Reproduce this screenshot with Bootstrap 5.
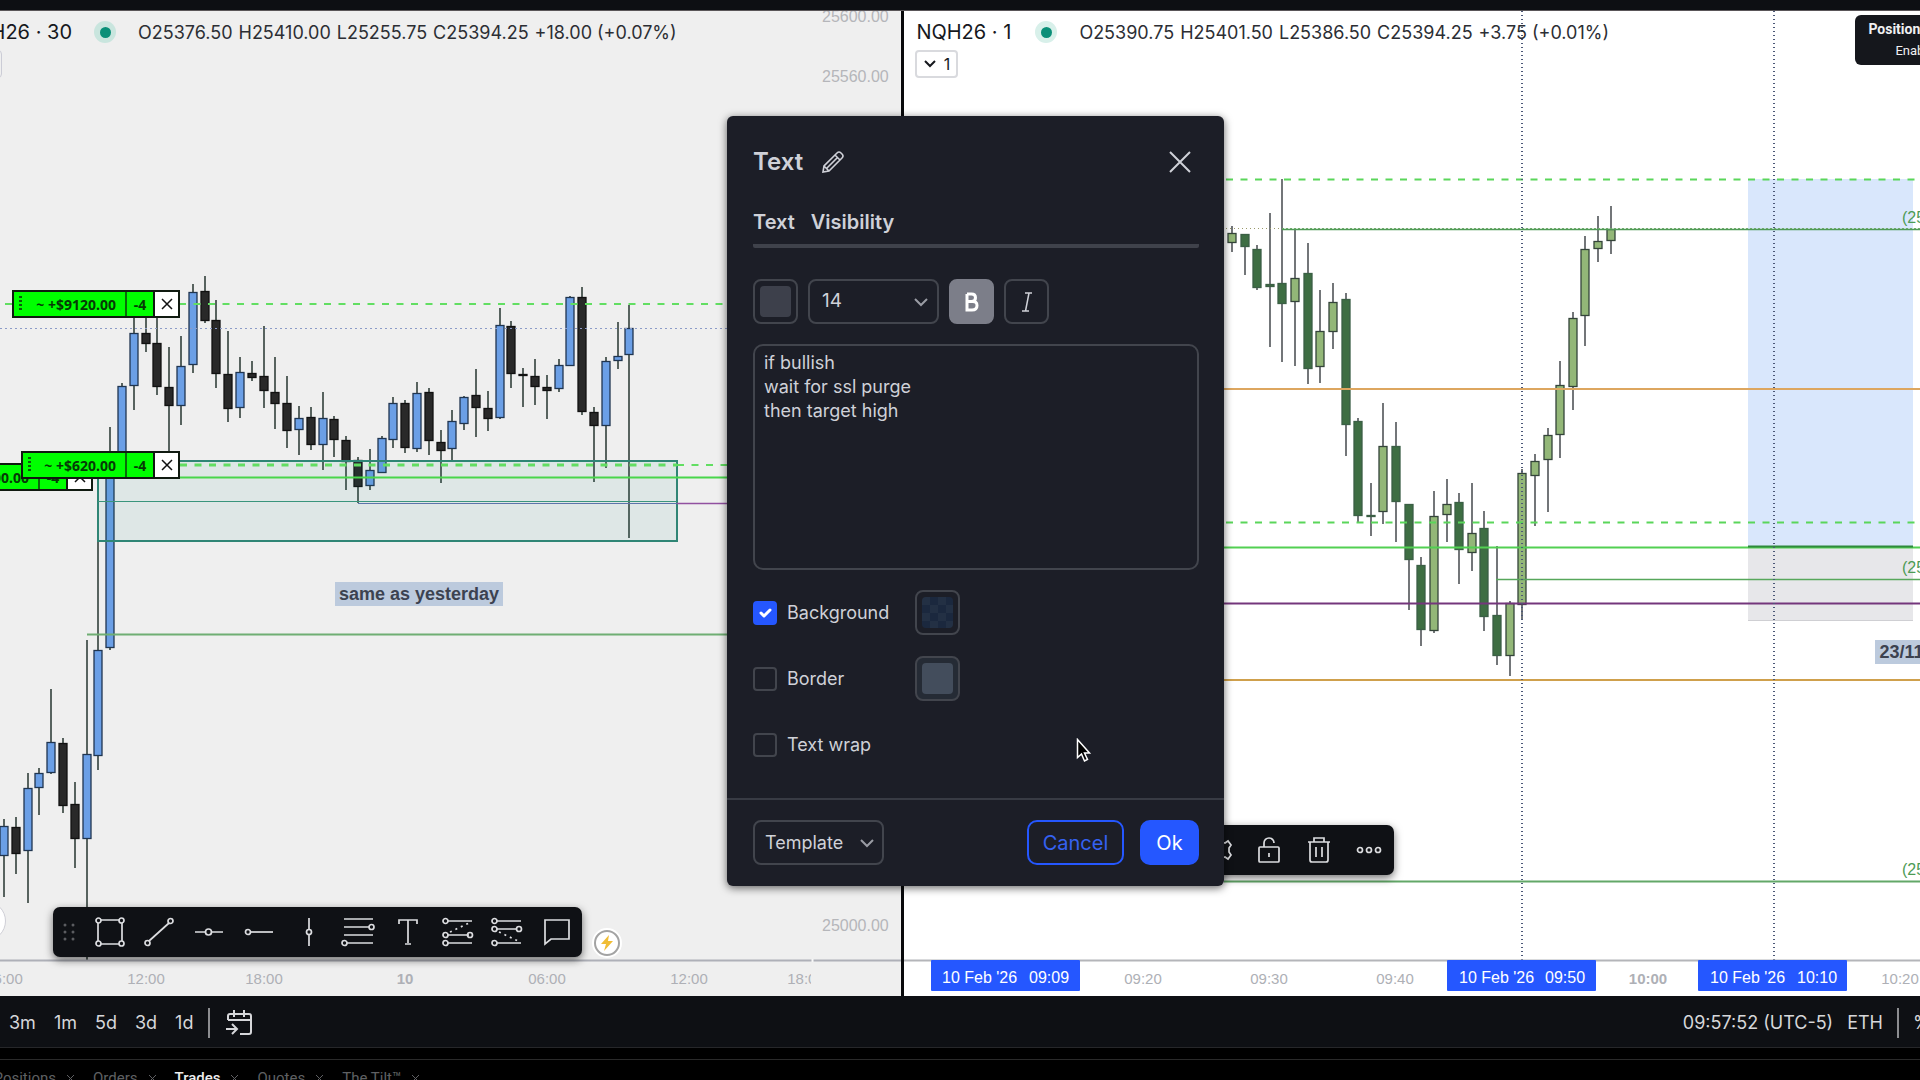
<!DOCTYPE html>
<html lang="en">
<head>
<meta charset="utf-8">
<meta name="viewport" content="width=device-width, initial-scale=1">
<title>NQH26 charts</title>
<link href="https://cdn.jsdelivr.net/npm/bootstrap@5.3.0/dist/css/bootstrap.min.css" rel="stylesheet">
<style>
  :root { --ink: #0f1115; --panel: #1c1e27; --line: #42454d; --soft: #cfd1d8; --blue: #2557ff; }
  body { font-family: Inter, "Open Sans", sans-serif; background: #000; color: var(--soft); }
  svg { display: block; }
  .icon { fill: none; stroke: currentColor; stroke-width: 2; }
  .topstrip { height: 11px; background: #0d0f13; border-bottom: 1px solid #5a5659; }
  .pane-left { flex: 0 0 calc(47% + 2px); background: #efefef; border-right: 3px solid #08090b; }
  .pane-right { background: #fff; }
  .plot { position: absolute; inset: 0; width: 100%; height: 100%; }
  .legend { position: absolute; top: 7px; left: 0; height: 28px; color: #16181d; font-size: 20px; white-space: nowrap; }
  .pane-right .legend { left: 12px; }
  .symbol-clip { width: 72px; overflow: hidden; justify-content: flex-end; }
  .status-dot { width: 22px; height: 22px; margin: 0 22px; border-radius: 50%; background: #c9e5de; display: grid; place-items: center; }
  .pane-right .status-dot { background: #d8f0ea; margin: 0 22px 0 24px; }
  .status-dot::after { content: ""; width: 11px; height: 11px; border-radius: 50%; background: #0b8f78; }
  .ohlc { font-size: 18px; gap: 6px; padding-top: 1px; color: #2c2e34; }
  .count-btn { position: absolute; left: 11px; top: 39px; width: 43px; height: 28px; border: 2px solid #d9dade; border-radius: 4px; background: #fff; color: #16181d; font-size: 16px; }
  .edge-btn { position: absolute; left: -8px; top: 39px; width: 10px; height: 28px; border: 1px solid #cbccd6; border-radius: 4px; }
  .order-tag { position: absolute; height: 28px; border: 2px solid #101a10; background: #0f0; color: #063b06; font: bold 14px "Noto Sans", sans-serif; }
  .order-tag .money { justify-content: flex-end; overflow: hidden; white-space: nowrap; padding-right: 9px; }
  .order-tag .qty { width: 28px; border-left: 2px solid #0a6b0a; }
  .order-tag button { width: 25px; background: #fff; border: 0; border-left: 2px solid #101a10; color: #111; }
  .order-tag .icon { stroke-width: 1.5; }
  .grip { width: 3px; height: 16px; margin-left: 5px; background: repeating-linear-gradient(#0a5c0a 0 2px, transparent 2px 4px); }
  .note { position: absolute; font: bold 18px "Liberation Sans", sans-serif; color: #3c4250; background: #bccadd; line-height: 24px; padding: 0 4px; white-space: nowrap; }
  .toolbox { position: absolute; height: 50px; border-radius: 7px; background: var(--ink); color: #dcdde0; box-shadow: 0 3px 8px rgba(0,0,0,.55); }
  .toolbox button { width: 50px; padding: 0; border: 0; background: none; color: inherit; display: grid; place-items: center; }
  .toolbox .icon { stroke-width: 1.7; }
  .bolt { position: absolute; left: 594px; top: 919px; width: 26px; height: 26px; border: 2px solid #a3a3a3; border-radius: 50%; background: #fff; box-shadow: 0 0 0 2px #fff; display: grid; place-items: center; padding: 0; }
  .round-edge { position: absolute; left: -34px; top: 890px; width: 40px; height: 40px; border-radius: 50%; background: #fff; border: 1px solid #cfcfd6; }
  .position-card { position: absolute; left: 951px; top: 4px; width: 140px; height: 50px; border-radius: 6px; background: #15171c; color: #f0f0f2; font: 14px/21px Roboto, sans-serif; padding: 4px 13px; }
  .position-card div + div { padding-left: 27px; font-size: 13px; }
  .dialog { position: absolute; z-index: 5; left: 727px; top: 116px; width: 497px; background: var(--panel); border-radius: 6px; box-shadow: 0 2px 8px rgba(0,0,0,.6); }
  .dialog-main { padding: 26px 25px 31px 26px; }
  .dialog h1 { font-size: 24px; line-height: 40px; font-weight: 600; }
  .dialog .plain { border: 0; background: none; color: inherit; padding: 0; }
  .dialog .rename { margin-left: 18px; }
  .tabs { margin-top: 28px; border-bottom: 4px solid #3f424b; gap: 16px; height: 38px; border-radius: 2px; }
  .tabs a { font-size: 20px; line-height: 24px; font-weight: 600; color: var(--soft); text-decoration: none; }
  .tools { margin-top: 31px; gap: 10px; }
  .box { height: 45px; border: 2px solid var(--line); border-radius: 8px; background: transparent; color: var(--soft); }
  .square { width: 45px; padding: 5px; }
  .square i { display: block; width: 100%; height: 100%; border-radius: 4px; background: #3d404b; }
  .square .slate { background: #434d5c; }
  .square .checks { background: repeating-conic-gradient(#1b283e 0 25%, #233044 0 50%) 0 0 / 16px 16px; }
  .size-box { width: 131px; font-size: 19px; padding: 0 12px; appearance: none; background: url("data:image/svg+xml,%3Csvg xmlns='http://www.w3.org/2000/svg' width='14' height='10'%3E%3Cpath d='M1 2l6 6 6-6' fill='none' stroke='%239a9ca4' stroke-width='2'/%3E%3C/svg%3E") no-repeat right 9px center; }
  .box.on { background: #7c7e89; border-color: #7c7e89; color: #fff; }
  .message { width: 100%; height: 226px; margin-top: 20px; padding: 5px 9px; border: 2px solid var(--line); border-radius: 10px; background: transparent; color: var(--soft); font-size: 18px; line-height: 24px; resize: none; display: block; }
  .options { margin-top: 20px; gap: 21px; }
  .options > div { height: 45px; }
  .options label { font-size: 18px; width: 128px; margin-left: 10px; }
  .options .form-check-input { width: 24px; height: 24px; margin: 0; border: 2px solid var(--line); border-radius: 4px; background-color: transparent; }
  .options .form-check-input:checked { background-color: var(--blue); border-color: var(--blue); }
  .dialog-foot { border-top: 2px solid #383b44; padding: 20px 25px 21px 26px; }
  .template { width: 131px; font-size: 18px; padding: 0 8px 0 10px; }
  .template .icon { color: #9a9ca4; }
  .cancel { width: 97px; font-size: 20px; border-color: var(--blue); color: #3562f2; border-radius: 10px; }
  .okay { width: 59px; font-size: 20px; border-color: var(--blue); background: var(--blue); color: #fff; border-radius: 10px; padding: 0; }
  .rangebar { height: 52px; padding-top: 2px; background: #0e1014; border-bottom: 1px solid #26272a; color: #d6d7da; font-size: 18px; }
  .rangebar a { color: inherit; text-decoration: none; }
  .rangebar .ranges { padding-left: 9px; gap: 18px; }
  .divide { width: 2px; height: 30px; background: #8c8d90; }
  .ranges .divide { margin: 0 -3px; }
  .rangebar .clock { gap: 14px; white-space: nowrap; }
  .clip-end { width: 7px; overflow: hidden; }
  .dock { margin-top: 11px; height: 21px; border-top: 1px solid #2a2a2a; padding-top: 7px; font-size: 15px; line-height: 22px; gap: 18px; overflow: hidden; color: #5f6063; font-family: Roboto, sans-serif; white-space: nowrap; }
  .dock a { color: inherit; text-decoration: none; }
  .dock a.current { color: #eee; font-weight: 500; }
  .dock .first { width: 56px; display: flex; justify-content: flex-end; overflow: hidden; }
  .dock > div { display: flex; gap: 10px; align-items: center; height: 22px; }
  .pointer { position: absolute; z-index: 6; left: 1076px; top: 738px; }
  .axis { font: 15px "Liberation Sans", sans-serif; fill: #aeb0b6; text-anchor: middle; }
  .price { font: 16px "Liberation Sans", sans-serif; fill: #b5b6ba; }
  .stamp { font: 16px "Liberation Sans", sans-serif; fill: #fff; }
  .level { font: 16px "Liberation Sans", sans-serif; fill: #4d9b55; }
</style>
</head>
<body>
<div class="vh-100 d-flex flex-column overflow-hidden position-relative">
  <div class="topstrip flex-shrink-0"></div>

  <main class="d-flex flex-grow-1 overflow-hidden">
    <section class="pane-left position-relative overflow-hidden">
      <svg class="plot" role="img" aria-label="30 minute chart">
        <g transform="translate(0,-11)">
          <g id="leftCandles"></g>
          <rect x="98" y="461" width="579" height="80" fill="#14917b" fill-opacity=".08" stroke="#2f8575" stroke-width="2"/>
          <path d="M98 501.500H677" stroke="#3a957c"/>
          <path d="M0 328.500H760" stroke="#8c9bc8" stroke-dasharray="2 3"/>
          <path d="M5 304H760" stroke="#62de62" stroke-width="2" stroke-dasharray="7 7.500"/>
          <path d="M180 465H677" stroke="#62de62" stroke-width="3" stroke-dasharray="7 7.500"/>
          <path d="M677 465H760" stroke="#62de62" stroke-width="2" stroke-dasharray="7 7.500"/>
          <path d="M98 477.500H760" stroke="#48d64b" stroke-width="2"/>
          <path d="M358 503.500H677" stroke="#5c74ab"/>
          <path d="M677 503.500H760" stroke="#9150a0" stroke-width="1.500"/>
          <path d="M87 634.500H760" stroke="#6fae73" stroke-width="2"/>
          <path d="M0 960.500H901" stroke="#aeb0b8" stroke-width="2"/>
          <path d="M812.500 959V962" stroke="#f7f7f7" stroke-width="2"/>
          <g class="axis">
            <text x="4" y="984">06:00</text><text x="146" y="984">12:00</text><text x="264" y="984">18:00</text>
            <text x="405" y="984" font-weight="bold">10</text><text x="547" y="984">06:00</text><text x="689" y="984">12:00</text>
          </g>
          <clipPath id="axisEnd"><rect x="780" y="962" width="31" height="32"/></clipPath>
          <g class="axis" clip-path="url(#axisEnd)"><text x="806" y="984">18:00</text></g>
          <g class="price"><text x="822" y="22">25600.00</text><text x="822" y="82">25560.00</text><text x="822" y="931">25000.00</text></g>
        </g>
      </svg>

      <div class="legend d-flex align-items-center">
        <div class="symbol-clip d-flex"><span>NQH26 · 30</span></div>
        <span class="status-dot"></span>
        <div class="ohlc d-flex"><span>O25376.50</span><span>H25410.00</span><span>L25255.75</span><span>C25394.25</span><span>+18.00 (+0.07%)</span></div>
      </div>
      <div class="edge-btn"></div>

      <div class="order-tag d-flex align-items-stretch" style="left:-60px;top:452px;width:153px">
        <span class="money flex-grow-1 d-flex align-items-center">+$1000.00</span>
        <span class="qty d-flex align-items-center justify-content-center">-4</span>
        <button class="d-grid p-0" style="place-items:center" aria-label="Cancel order"><svg class="icon" width="12" height="12"><path d="M1 1l10 10M11 1L1 11"/></svg></button>
      </div>
      <div class="order-tag d-flex align-items-stretch" style="left:12px;top:279px;width:168px">
        <span class="grip align-self-center"></span>
        <span class="money flex-grow-1 d-flex align-items-center">~ +$9120.00</span>
        <span class="qty d-flex align-items-center justify-content-center">-4</span>
        <button class="d-grid p-0" style="place-items:center" aria-label="Cancel order"><svg class="icon" width="12" height="12"><path d="M1 1l10 10M11 1L1 11"/></svg></button>
      </div>
      <div class="order-tag d-flex align-items-stretch" style="left:21px;top:440px;width:159px">
        <span class="grip align-self-center"></span>
        <span class="money flex-grow-1 d-flex align-items-center">~ +$620.00</span>
        <span class="qty d-flex align-items-center justify-content-center">-4</span>
        <button class="d-grid p-0" style="place-items:center" aria-label="Cancel order"><svg class="icon" width="12" height="12"><path d="M1 1l10 10M11 1L1 11"/></svg></button>
      </div>

      <div class="note" style="left:335px;top:571px">same as yesterday</div>
      <div class="round-edge"></div>

      <div class="toolbox d-flex" style="left:53px;top:896px;width:529px">
        <svg width="32" height="50" fill="#5b5c60"><circle cx="12" cy="18" r="1.500"/><circle cx="20" cy="18" r="1.500"/><circle cx="12" cy="25" r="1.500"/><circle cx="20" cy="25" r="1.500"/><circle cx="12" cy="32" r="1.500"/><circle cx="20" cy="32" r="1.500"/></svg>
        <button aria-label="Rectangle"><svg class="icon" width="30" height="30"><path d="M6 3H24M6 27H24M3 6V24M27 6V24"/><circle cx="3.500" cy="3.500" r="2.500"/><circle cx="26.500" cy="3.500" r="2.500"/><circle cx="3.500" cy="26.500" r="2.500"/><circle cx="26.500" cy="26.500" r="2.500"/></svg></button>
        <button aria-label="Trend line"><svg class="icon" width="30" height="30"><path d="M5 24L25 6"/><circle cx="3.500" cy="26" r="2.500"/><circle cx="26.500" cy="4" r="2.500"/></svg></button>
        <button aria-label="Horizontal line"><svg class="icon" width="30" height="30"><path d="M1 15H11M18 15H29"/><circle cx="14.500" cy="15" r="3"/></svg></button>
        <button aria-label="Horizontal ray"><svg class="icon" width="30" height="30"><path d="M7 15H29"/><circle cx="4" cy="15" r="2.500"/></svg></button>
        <button aria-label="Vertical line"><svg class="icon" width="30" height="30"><path d="M15 1V12M15 18V29"/><circle cx="15" cy="15" r="2.500"/></svg></button>
        <button aria-label="Fib retracement"><svg class="icon" width="34" height="30"><path d="M3 2H32M3 10H28M3 18H32M6 26H32"/><circle cx="30.500" cy="10" r="2.500"/><circle cx="3.500" cy="26" r="2.500"/></svg></button>
        <button aria-label="Text"><svg class="icon" width="30" height="30"><path d="M6 7V3H24V7M15 3V26M12 27H18"/></svg></button>
        <button aria-label="Long position"><svg class="icon" width="32" height="30"><path d="M6 4H30M6 18H27M6 26H30"/><path d="M8 15L27 6" stroke-dasharray="2 4"/><circle cx="3.500" cy="4" r="2.500"/><circle cx="3.500" cy="18" r="2.500"/><circle cx="28" cy="18" r="2.500"/><circle cx="3.500" cy="26" r="2.500"/></svg></button>
        <button aria-label="Short position"><svg class="icon" width="32" height="30"><path d="M6 4H30M6 12H26M6 26H30"/><path d="M8 15L27 24" stroke-dasharray="2 4"/><circle cx="3.500" cy="4" r="2.500"/><circle cx="3.500" cy="12" r="2.500"/><circle cx="28" cy="12" r="2.500"/><circle cx="3.500" cy="26" r="2.500"/></svg></button>
        <button aria-label="Comment"><svg class="icon" width="30" height="30"><path d="M3 3H27V22H9L3 27Z"/></svg></button>
      </div>
      <button class="bolt" aria-label="Events"><svg width="14" height="16"><path d="M9 0L1 9H6L4 16L13 6H8Z" fill="#f0bd35"/></svg></button>
    </section>

    <section class="pane-right position-relative flex-grow-1 overflow-hidden">
      <svg class="plot" role="img" aria-label="1 minute chart">
        <g transform="translate(-904,-11)">
          <path d="M1748 179H1913V547H1748Z" fill="#d9e7fc"/>
          <path d="M1748 547H1913V621H1748Z" fill="#e7e7ea"/>
          <path d="M1748 620.500H1913" stroke="#cfcfd3"/>
          <g id="rightCandles"></g>
          <path d="M1226 179.500H1920" stroke="#5ad65a" stroke-width="2" stroke-dasharray="7 7.500"/>
          <path d="M1226 228.500H1282" stroke="#9a9a6a" stroke-dasharray="1 3"/>
          <path d="M1282 228.500H1920" stroke="#79b070" stroke-dasharray="2 2"/>
          <path d="M1282 229.500H1920" stroke="#4f9a57" stroke-width="1.500"/>
          <path d="M1224 389H1920" stroke="#dda65f" stroke-width="2"/>
          <path d="M1226 522.500H1920" stroke="#5ad65a" stroke-width="2" stroke-dasharray="7 7.500"/>
          <path d="M1224 547.500H1920" stroke="#52d052" stroke-width="2"/>
          <path d="M1748 546.500H1913" stroke="#2e8a3c" stroke-width="2"/>
          <path d="M1496 579.500H1920" stroke="#57a75b" stroke-width="1.500"/>
          <path d="M1224 603.500H1920" stroke="#74367c" stroke-width="2"/>
          <path d="M1224 680H1920" stroke="#cfa04c" stroke-width="2"/>
          <path d="M1224 881.500H1920" stroke="#63a868" stroke-width="2"/>
          <path d="M1522 11V960M1774 11V960" stroke="#4c5878" stroke-width="2" stroke-dasharray="1 3"/>
          <path d="M903 960.500H1920" stroke="#b4b5b9" stroke-width="2"/>
          <g fill="#2557ff"><rect x="931" y="960" width="149" height="31" rx="1"/><rect x="1447" y="960" width="149" height="31" rx="1"/><rect x="1698" y="960" width="149" height="31" rx="1"/></g>
          <g class="stamp">
            <text x="942" y="983">10 Feb '26</text><text x="1029" y="983">09:09</text>
            <text x="1459" y="983">10 Feb '26</text><text x="1545" y="983">09:50</text>
            <text x="1710" y="983">10 Feb '26</text><text x="1797" y="983">10:10</text>
          </g>
          <g class="axis"><text x="1143" y="984">09:20</text><text x="1269" y="984">09:30</text><text x="1395" y="984">09:40</text><text x="1648" y="984" font-weight="bold">10:00</text><text x="1900" y="984">10:20</text></g>
          <g class="level"><text x="1902" y="223">(25394.25)</text><text x="1902" y="573">(25</text><text x="1902" y="875">(25</text></g>
        </g>
      </svg>
      <div class="legend d-flex align-items-center">
        <span>NQH26 · 1</span>
        <span class="status-dot"></span>
        <div class="ohlc d-flex"><span>O25390.75</span><span>H25401.50</span><span>L25386.50</span><span>C25394.25</span><span>+3.75 (+0.01%)</span></div>
      </div>
      <button class="count-btn d-flex align-items-center justify-content-center gap-2 p-0"><svg class="icon" width="12" height="8"><path d="M1 1l5 5 5-5"/></svg>1</button>
      <div class="position-card text-nowrap"><div class="fw-bold">Position size</div><div>Enabled</div></div>
      <div class="note" style="left:971px;top:629px">23/11</div>

      <div class="toolbox d-flex" style="left:290px;top:814px;width:200px">
        <button aria-label="Settings"><svg class="icon" width="28" height="28"><path d="M12 2h4l1 4 3 1 3-2 3 4-2 3v4l2 3-3 4-3-2-3 1-1 4h-4"/><circle cx="14" cy="14" r="4"/></svg></button>
        <button aria-label="Unlock"><svg class="icon" width="26" height="28"><rect x="3" y="11" width="20" height="15" rx="1"/><path d="M8 11V7a5 5 0 0 1 10 0M13 17v4"/></svg></button>
        <button aria-label="Delete"><svg class="icon" width="26" height="28"><path d="M2 6H24M8 6V2H18V6M4 6V24a2 2 0 0 0 2 2H20a2 2 0 0 0 2-2V6M10 11V21M16 11V21"/></svg></button>
        <button aria-label="More"><svg class="icon" width="28" height="10"><circle cx="5" cy="5" r="2.500"/><circle cx="14" cy="5" r="2.500"/><circle cx="23" cy="5" r="2.500"/></svg></button>
      </div>
    </section>
  </main>

  <footer class="flex-shrink-0">
    <div class="rangebar d-flex align-items-center justify-content-between">
      <div class="ranges d-flex align-items-center">
        <a href="#">3m</a><a href="#">1m</a><a href="#">5d</a><a href="#">3d</a><a href="#">1d</a>
        <span class="divide"></span>
        <a href="#" aria-label="Go to date"><svg class="icon" width="28" height="26"><path d="M3 10V6a2 2 0 0 1 2-2H24a2 2 0 0 1 2 2V22a2 2 0 0 1-2 2H15M3 10H26M9 0V7M19 0V7M1 19H11M7 14l5 5-5 5"/></svg></a>
      </div>
      <div class="clock d-flex align-items-center"><span>09:57:52 (UTC-5)</span><span>ETH</span><span class="divide"></span><span class="clip-end">%</span></div>
    </div>
    <nav class="dock d-flex">
      <div><a class="first" href="#"><span>Positions</span></a><svg class="icon" width="9" height="9"><path d="M1 1l7 7M8 1L1 8" stroke-width="1"/></svg></div>
      <div><a href="#">Orders</a><svg class="icon" width="9" height="9"><path d="M1 1l7 7M8 1L1 8" stroke-width="1"/></svg></div>
      <div><a class="current" href="#">Trades</a><svg class="icon" width="9" height="9"><path d="M1 1l7 7M8 1L1 8" stroke-width="1"/></svg></div>
      <div><a href="#">Quotes</a><svg class="icon" width="9" height="9"><path d="M1 1l7 7M8 1L1 8" stroke-width="1"/></svg></div>
      <div><a href="#">The Tilt™</a><svg class="icon" width="9" height="9"><path d="M1 1l7 7M8 1L1 8" stroke-width="1"/></svg></div>
    </nav>
  </footer>

  <form class="dialog" role="dialog" aria-label="Text settings">
    <div class="dialog-main">
      <div class="d-flex align-items-center">
        <h1 class="m-0">Text</h1>
        <button type="button" class="plain rename" aria-label="Rename"><svg class="icon" width="24" height="24"><path stroke-width="1.600" d="M2 22l1-6L16 3q2-2 4 0l1 1q2 2 0 4L8 21ZM14 5l5 5M3 16l5 5M6 18L17 7"/></svg></button>
        <button type="button" class="plain ms-auto me-2" aria-label="Close"><svg class="icon" width="22" height="22"><path d="M1 1l20 20M21 1L1 21"/></svg></button>
      </div>
      <nav class="tabs d-flex"><a href="#">Text</a><a href="#">Visibility</a></nav>
      <div class="tools d-flex">
        <button type="button" class="box square" aria-label="Text colour"><i></i></button>
        <select class="box size-box" aria-label="Font size"><option>14</option></select>
        <button type="button" class="box square on d-grid" style="place-items:center" aria-label="Bold"><svg class="icon" width="14" height="20"><path stroke-width="3" d="M2 2V18H7q5 0 5-4.500T7 9.500H2M2 2H6.500q4 0 4 3.700T6.500 9.500"/></svg></button>
        <button type="button" class="box square d-grid" style="place-items:center" aria-label="Italic"><svg class="icon" width="12" height="20"><path stroke-width="1.500" d="M4 1H11M1 19H8M8 1L4.500 19"/></svg></button>
      </div>
      <textarea class="message" aria-label="Text content">if bullish
wait for ssl purge
then target high</textarea>
      <div class="options d-flex flex-column">
        <div class="d-flex align-items-center"><input class="form-check-input" type="checkbox" id="bg" checked><label for="bg">Background</label><button type="button" class="box square" aria-label="Background colour"><i class="checks"></i></button></div>
        <div class="d-flex align-items-center"><input class="form-check-input" type="checkbox" id="bd"><label for="bd">Border</label><button type="button" class="box square" style="background:#252b35" aria-label="Border colour"><i class="slate"></i></button></div>
        <div class="d-flex align-items-center"><input class="form-check-input" type="checkbox" id="wr"><label for="wr">Text wrap</label></div>
      </div>
    </div>
    <div class="dialog-foot d-flex align-items-center">
      <button type="button" class="box template d-flex align-items-center justify-content-between">Template <svg class="icon" width="14" height="10"><path d="M1 2l6 6 6-6"/></svg></button>
      <button type="button" class="box cancel ms-auto me-3 p-0">Cancel</button>
      <button type="submit" class="box okay">Ok</button>
    </div>
  </form>

  <svg class="pointer" width="16" height="25"><path d="M1.500 1.500V19.500L5.500 16L8.500 23L11.500 21.500L8.500 15H13.500Z" fill="#000" stroke="#fff" stroke-width="1.500"/></svg>
</div>

<script>
// Each candle: wick top, body top, body bottom, wick bottom, direction (1 up, 0 down)
const left = [
[819,826,856,897,1],[817,827,854,874,0],[773,788,851,903,1],[768,773,788,815,1],[689,742,773,774,1],[738,743,806,813,0],[782,804,839,868,0],[640,754,839,960,1],[541,650,756,770,1],[427,470,648,650,1],
[383,386,475,475,1],[300,333,386,410,1],[310,333,344,352,0],[310,343,387,395,0],[347,387,406,455,0],[336,366,406,425,1],[284,292,365,373,1],[276,291,321,323,0],[300,320,374,388,0],[331,374,409,422,0],
[357,372,408,418,1],[361,373,378,381,0],[326,376,391,408,0],[357,392,404,429,0],[376,403,431,448,0],[406,418,430,455,1],[407,417,445,450,0],[392,418,445,470,1],[416,419,440,457,0],[436,440,462,490,0],
[457,460,487,503,0],[449,470,486,490,1],[436,438,473,473,1],[397,403,440,448,1],[400,403,448,453,0],[382,393,449,452,1],[388,392,441,455,0],[430,442,451,483,0],[410,421,449,460,1],[396,397,424,430,1],
[369,395,408,437,0],[391,408,419,431,0],[308,325,418,419,1],[321,326,374,388,0],[368,374,376,407,0],[359,376,387,405,0],[375,387,391,419,0],[359,365,389,392,1],[296,297,366,366,1],[287,297,412,415,0],
[407,412,426,482,0],[357,361,426,468,1],[322,356,361,369,1],[305,328,355,538,1]];
const right = [
[226,233,243,252,1],[234,234,247,275,0],[245,249,288,290,0],[213,284,287,347,0],[179,283,304,362,0],[230,278,302,366,1],[243,273,369,384,0],[290,331,367,383,1],[283,302,332,349,1],[293,299,425,456,0],
[418,421,516,522,0],[483,515,517,536,0],[403,446,512,524,1],[422,446,502,542,0],[504,504,560,610,0],[557,565,630,646,0],[491,516,631,633,1],[479,504,515,542,1],[493,502,550,584,0],[483,533,553,571,1],
[511,528,617,631,0],[546,615,656,665,0],[601,603,656,676,1],[469,473,605,619,1],[454,461,476,526,1],[428,435,460,512,1],[361,385,435,458,1],[312,318,387,410,1],[236,249,316,346,1],[216,241,249,262,1],[206,229,241,254,1]];
function draw(id, rows, x0, step, up, down, upEdge, downEdge, wick) {
  document.getElementById(id).innerHTML = rows.map((r, i) => {
    const x = Math.round(x0 + step * i);
    return `<path d="M${x} ${r[0]}V${r[3]}" stroke="${wick}" stroke-width="1.5"/>` +
      `<rect x="${x - 4}" y="${r[1] + .5}" width="8" height="${Math.max(1, r[2] - r[1] - 1)}" fill="${r[4] ? up : down}" stroke="${r[4] ? upEdge : downEdge}" stroke-width="1.3"/>`;
  }).join('');
}
draw('leftCandles', left, 3.9, 11.8, '#6b9fe6', '#292929', '#203550', '#111', '#26352f');
draw('rightCandles', right, 1232, 12.62, '#93b778', '#3e6e43', '#34443a', '#3b5f45', '#45484c');
</script>
<script src="https://cdn.jsdelivr.net/npm/bootstrap@5.3.0/dist/js/bootstrap.bundle.min.js"></script>
</body>
</html>
